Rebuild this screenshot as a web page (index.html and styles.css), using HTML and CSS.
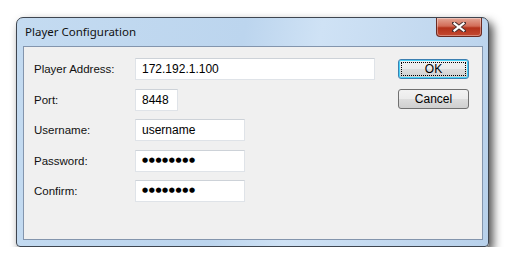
FILE: index.html
```html
<!DOCTYPE html>
<html lang="en">
<head>
    <meta charset="UTF-8">
    <title>Player Configuration</title>
    <link rel="stylesheet" href="styles.css">
</head>
<body>
    <div class="window">
        <div class="titlebar">
            <span class="title">Player Configuration</span>
            <div class="close">
                <svg width="14" height="10" viewBox="0 0 14 10">
                    <path d="M2 1 L12 9 M12 1 L2 9" stroke="#4a3030" stroke-width="4" stroke-linecap="square"/>
                    <path d="M2.5 1.5 L11.5 8.5 M11.5 1.5 L2.5 8.5" stroke="#fff" stroke-width="2.2" stroke-linecap="square"/>
                </svg>
            </div>
        </div>
        <div class="client">
            <div class="form">
                <label class="label">Player Address:</label>
                <div class="field wide">172.192.1.100</div>

                <label class="label">Port:</label>
                <div class="field port">8448</div>

                <label class="label">Username:</label>
                <div class="field mid">username</div>

                <label class="label">Password:</label>
                <div class="field mid dots">●●●●●●●●</div>

                <label class="label">Confirm:</label>
                <div class="field mid dots">●●●●●●●●</div>
            </div>
            <div class="buttons">
                <button class="btn default"><span class="focus">OK</span></button>
                <button class="btn">Cancel</button>
            </div>
        </div>
    </div>
</body>
</html>
```

FILE: styles.css
```css
body {
    margin: 0;
    padding: 17px 0 0 16px;
    background-color: #fff;
    font-family: "Liberation Sans", Arial, sans-serif;
    font-size: 11.5px;
    color: #111;
}
.window {
    width: 471px;
    height: 228px;
    border: 1px solid #3f4650;
    border-radius: 7px 7px 4px 4px;
    background: linear-gradient(100deg, #c4dbf1 0%, #bcd5ee 45%, #cfe2f5 60%, #b8d1eb 100%);
    box-shadow: 4px 5px 10px rgba(0, 0, 0, 0.7);
    display: flex;
    flex-direction: column;
}
.titlebar {
    height: 28px;
    display: flex;
    align-items: flex-start;
    justify-content: space-between;
    padding: 0 6px 0 8px;
}
.title {
    font-family: "Noto Sans", sans-serif;
    font-size: 11.5px;
    color: #111;
    margin-top: 6px;
}
.close {
    width: 44px;
    height: 18px;
    border: 1px solid #6b2a22;
    border-top: none;
    border-radius: 0 0 4px 4px;
    background: linear-gradient(#e4a595 0%, #d26c57 45%, #b3321b 55%, #c44a32 100%);
    box-shadow: inset 0 0 0 1px rgba(255, 255, 255, 0.35);
    display: flex;
    align-items: center;
    justify-content: center;
}
.client {
    flex: 1;
    margin: 0 5px 6px 6px;
    border: 1px solid #8395ad;
    background-color: #f0f0f0;
    display: flex;
    justify-content: space-between;
    padding: 11px 13px 0 10px;
}
.form {
    display: grid;
    grid-template-columns: 101px auto;
    grid-auto-rows: 22px;
    row-gap: 8.5px;
    align-items: center;
    align-content: start;
}
.field {
    height: 22px;
    box-sizing: border-box;
    background-color: #fff;
    border: 1px solid #dfe3e8;
    border-top-color: #cdd2d8;
    padding: 0 6px;
    line-height: 20px;
    font-size: 12px;
    color: #000;
}
.wide { width: 240px; }
.port { width: 43px; }
.mid { width: 110px; }
.dots {
    font-family: "DejaVu Sans", sans-serif;
    font-size: 7px;
    letter-spacing: 0.6px;
    line-height: 19px;
}
.buttons {
    display: flex;
    flex-direction: column;
    gap: 10px;
    padding-top: 1px;
}
.btn {
    width: 71px;
    height: 20px;
    border: 1px solid #707070;
    border-radius: 3px;
    background: linear-gradient(#f2f2f2 0%, #ebebeb 50%, #dddddd 51%, #cfcfcf 100%);
    font-family: "Liberation Sans", Arial, sans-serif;
    font-size: 12px;
    color: #000;
    padding: 0;
}
.btn.default {
    border-color: #3c7fb1;
    box-shadow: inset 0 0 0 1px #48d3f8;
    padding: 2px;
}
.focus {
    display: flex;
    align-items: center;
    justify-content: center;
    height: 100%;
    border: 1px dotted #000;
    box-sizing: border-box;
}
```
